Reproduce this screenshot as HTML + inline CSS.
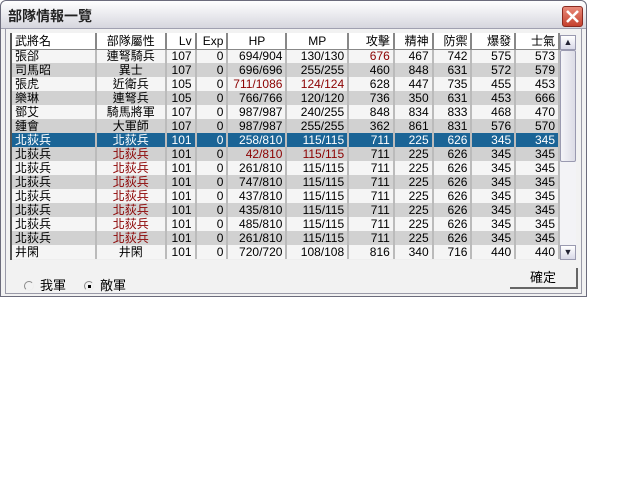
<!DOCTYPE html>
<html><head><meta charset="utf-8"><style>
*{margin:0;padding:0;box-sizing:border-box}
body{width:640px;height:480px;background:#fff;position:relative;overflow:hidden;font-family:"Liberation Sans","Noto Sans CJK TC","WenQuanYi Zen Hei",sans-serif;font-size:12px;color:#000}
#win{position:absolute;left:0;top:0;width:587px;height:297px;background:#f2f2f2;border:1px solid #6c6c7c;border-radius:6px 6px 0 0}
#title{position:absolute;left:0;top:0;width:585px;height:28px;background:linear-gradient(#fff,#d6d6de);border-radius:6px 6px 0 0;border-bottom:1px solid #a0a0b0}
#title span{position:absolute;left:7px;top:5px;font-size:14px;font-weight:bold;color:#222}
#close{position:absolute;left:561px;top:5px;width:21px;height:21px;border-radius:3px;background:linear-gradient(#e88a7a,#c5412e);border:1px solid #8a2a20}
#inner{position:absolute;left:4px;top:28px;width:577px;height:265px;border:1px solid #9a9aa8;border-top:none}
#list{position:absolute;left:10px;top:33px;width:550px;height:227px;border-left:2px solid #555;overflow:hidden;background:#eee}
table{border-collapse:collapse;table-layout:fixed;font-size:12px}
td,th{height:14px;line-height:12px;padding:0 3px;white-space:nowrap;overflow:hidden;border-right:2px solid #bbb}
tr{height:14px}
th{height:16px;background:#fff;font-weight:normal;border-right:2px solid #888;border-bottom:1px solid #888}
tr.h{height:16px}
tr.a td{background:rgba(245,245,245,.9)}
tr.b td{background:rgba(205,205,205,.9)}
tr.s td{background:#1a6496;color:#fff}
.r{text-align:right}.c{text-align:center}.l{text-align:left}
.red{color:#8b0000}
#sb{position:absolute;left:560px;top:35px;width:16px;height:225px;background:#f3f3f6}
.sbb{position:absolute;left:0;width:16px;height:15px;border:1px solid #9a9ab0;background:linear-gradient(#fff,#d8d8e8);font-size:9px;text-align:center;line-height:13px;color:#223}
#thumb{position:absolute;left:0;top:15px;width:16px;height:112px;border:1px solid #9a9ab0;background:linear-gradient(90deg,#f4f4f8,#dcdce6);border-radius:2px}
.radio{position:absolute;top:275px;font-size:13px}
.radio i{display:inline-block;width:10px;height:10px;border-radius:50%;border:1px solid #888;border-right-color:#eee;border-bottom-color:#eee;vertical-align:-1px;margin-right:6px;position:relative}
#ok{position:absolute;left:510px;top:268px;width:68px;height:21px;border-right:2px solid #666;border-bottom:2px solid #666;text-align:center;line-height:20px;font-size:13px}
</style></head><body>
<div id="win">
<div id="title"><span>部隊情報一覽</span>
<div id="close"><svg width="19" height="19" viewBox="0 0 19 19"><path d="M4 4L15 15M15 4L4 15" stroke="#fff" stroke-width="2.6"/></svg></div></div>
<div id="inner"></div>
</div>
<div id="list"><table>
<colgroup><col style="width:85px"><col style="width:70px"><col style="width:30px"><col style="width:32px"><col style="width:59px"><col style="width:62px"><col style="width:46px"><col style="width:39px"><col style="width:39px"><col style="width:44px"><col style="width:44px"></colgroup>
<tr class="h"><th class="l">武將名</th><th>部隊屬性</th><th class="r">Lv</th><th class="r">Exp</th><th>HP</th><th>MP</th><th class="r">攻擊</th><th class="r">精神</th><th class="r">防禦</th><th class="r">爆發</th><th class="r">士氣</th></tr>
<tr class="a"><td>張郃</td><td class="c">連弩騎兵</td><td class="r">107</td><td class="r">0</td><td class="r">694/904</td><td class="r">130/130</td><td class="r red">676</td><td class="r">467</td><td class="r">742</td><td class="r">575</td><td class="r">573</td></tr>
<tr class="b"><td>司馬昭</td><td class="c">異士</td><td class="r">107</td><td class="r">0</td><td class="r">696/696</td><td class="r">255/255</td><td class="r">460</td><td class="r">848</td><td class="r">631</td><td class="r">572</td><td class="r">579</td></tr>
<tr class="a"><td>張虎</td><td class="c">近衛兵</td><td class="r">105</td><td class="r">0</td><td class="r red">711/1086</td><td class="r red">124/124</td><td class="r">628</td><td class="r">447</td><td class="r">735</td><td class="r">455</td><td class="r">453</td></tr>
<tr class="b"><td>樂琳</td><td class="c">連弩兵</td><td class="r">105</td><td class="r">0</td><td class="r">766/766</td><td class="r">120/120</td><td class="r">736</td><td class="r">350</td><td class="r">631</td><td class="r">453</td><td class="r">666</td></tr>
<tr class="a"><td>鄧艾</td><td class="c">騎馬將軍</td><td class="r">107</td><td class="r">0</td><td class="r">987/987</td><td class="r">240/255</td><td class="r">848</td><td class="r">834</td><td class="r">833</td><td class="r">468</td><td class="r">470</td></tr>
<tr class="b"><td>鍾會</td><td class="c">大軍師</td><td class="r">107</td><td class="r">0</td><td class="r">987/987</td><td class="r">255/255</td><td class="r">362</td><td class="r">861</td><td class="r">831</td><td class="r">576</td><td class="r">570</td></tr>
<tr class="s"><td>北荻兵</td><td class="c">北荻兵</td><td class="r">101</td><td class="r">0</td><td class="r">258/810</td><td class="r">115/115</td><td class="r">711</td><td class="r">225</td><td class="r">626</td><td class="r">345</td><td class="r">345</td></tr>
<tr class="b"><td>北荻兵</td><td class="c red">北荻兵</td><td class="r">101</td><td class="r">0</td><td class="r red">42/810</td><td class="r red">115/115</td><td class="r">711</td><td class="r">225</td><td class="r">626</td><td class="r">345</td><td class="r">345</td></tr>
<tr class="a"><td>北荻兵</td><td class="c red">北荻兵</td><td class="r">101</td><td class="r">0</td><td class="r">261/810</td><td class="r">115/115</td><td class="r">711</td><td class="r">225</td><td class="r">626</td><td class="r">345</td><td class="r">345</td></tr>
<tr class="b"><td>北荻兵</td><td class="c red">北荻兵</td><td class="r">101</td><td class="r">0</td><td class="r">747/810</td><td class="r">115/115</td><td class="r">711</td><td class="r">225</td><td class="r">626</td><td class="r">345</td><td class="r">345</td></tr>
<tr class="a"><td>北荻兵</td><td class="c red">北荻兵</td><td class="r">101</td><td class="r">0</td><td class="r">437/810</td><td class="r">115/115</td><td class="r">711</td><td class="r">225</td><td class="r">626</td><td class="r">345</td><td class="r">345</td></tr>
<tr class="b"><td>北荻兵</td><td class="c red">北荻兵</td><td class="r">101</td><td class="r">0</td><td class="r">435/810</td><td class="r">115/115</td><td class="r">711</td><td class="r">225</td><td class="r">626</td><td class="r">345</td><td class="r">345</td></tr>
<tr class="a"><td>北荻兵</td><td class="c red">北荻兵</td><td class="r">101</td><td class="r">0</td><td class="r">485/810</td><td class="r">115/115</td><td class="r">711</td><td class="r">225</td><td class="r">626</td><td class="r">345</td><td class="r">345</td></tr>
<tr class="b"><td>北荻兵</td><td class="c red">北荻兵</td><td class="r">101</td><td class="r">0</td><td class="r">261/810</td><td class="r">115/115</td><td class="r">711</td><td class="r">225</td><td class="r">626</td><td class="r">345</td><td class="r">345</td></tr>
<tr class="a"><td>井閑</td><td class="c">井閑</td><td class="r">101</td><td class="r">0</td><td class="r">720/720</td><td class="r">108/108</td><td class="r">816</td><td class="r">340</td><td class="r">716</td><td class="r">440</td><td class="r">440</td></tr>
</table></div>
<div id="sb"><div class="sbb" style="top:0">&#9650;</div><div id="thumb"></div><div class="sbb" style="top:210px">&#9660;</div></div>
<div class="radio" style="left:24px"><i></i>我軍</div>
<div class="radio" style="left:84px"><i><b style="position:absolute;left:3px;top:3px;width:3px;height:3px;background:#000"></b></i>敵軍</div>
<div id="ok">確定</div>
</body></html>
